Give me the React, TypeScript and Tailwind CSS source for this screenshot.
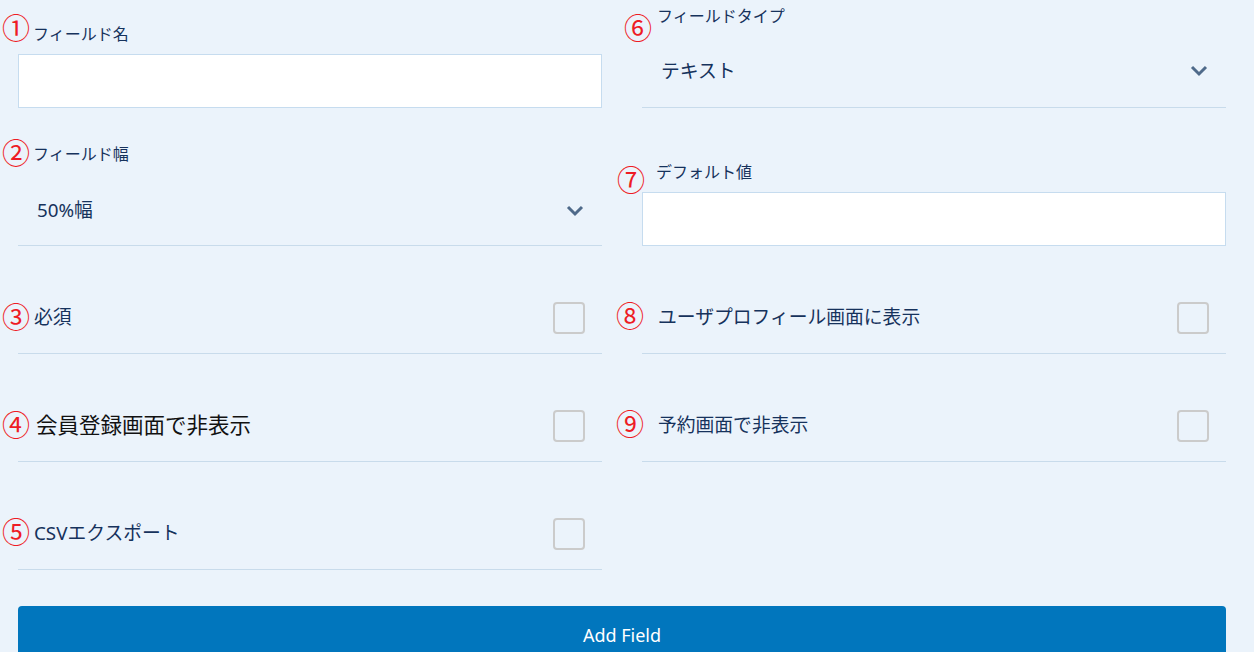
import React from "react";

const Chevron = () => (
  <svg width="18" height="12" viewBox="0 0 18 12" className="mr-[18px]">
    <polyline points="2,2 9,9 16,2" fill="none" stroke="#4f6a8a" strokeWidth="3" />
  </svg>
);

const Mark = ({ n, className }: { n: string; className: string }) => (
  <span className={`absolute text-[28px] leading-none text-[#ee1c25] ${className}`}>{n}</span>
);

const CheckRow = ({ label, big }: { label: string; big?: boolean }) => (
  <div className="flex items-center justify-between pt-[36px] border-b border-[#c8dbeb] h-[108px]">
    <span
      className={
        big
          ? "pl-[18px] text-[21.5px] text-[#111]"
          : "pl-[16px] text-[18.8px] text-[#16325c]"
      }
    >
      {label}
    </span>
    <div className="w-8 h-8 mr-[17px] rounded-[4px] border-2 border-[#cbcbcb]" />
  </div>
);

export default function App() {
  return (
    <div className="relative min-h-[652px] bg-[#ebf3fb] pl-[18px] pr-[28px] font-['Noto_Sans','Noto_Sans_CJK_JP',sans-serif] text-[#16325c] overflow-hidden">
      <div className="grid grid-cols-2 gap-x-10">
        {/* row 1 */}
        <div className="h-[108px] flex flex-col justify-end">
          <label className="pl-[15px] text-[16px] leading-6 mb-2">フィールド名</label>
          <div className="h-[54px] bg-white border border-[#c6dcef]" />
        </div>
        <div className="h-[108px] flex flex-col justify-end">
          <label className="pl-[15px] text-[16px] leading-6">フィールドタイプ</label>
          <div className="h-[80px] pt-[7px] flex items-center justify-between border-b border-[#c8dbeb]">
            <span className="pl-[19px] text-[18.8px]">テキスト</span>
            <Chevron />
          </div>
        </div>

        {/* row 2 */}
        <div className="h-[138px] flex flex-col justify-end">
          <label className="pl-[15px] text-[16px] leading-6 mb-[10px]">フィールド幅</label>
          <div className="h-[70px] flex items-center justify-between border-b border-[#c8dbeb]">
            <span className="pl-[19px] text-[18.8px]">50%幅</span>
            <Chevron />
          </div>
        </div>
        <div className="h-[138px] flex flex-col justify-end">
          <label className="pl-[14px] text-[16px] leading-6 mb-2">デフォルト値</label>
          <div className="h-[54px] bg-white border border-[#c6dcef]" />
        </div>

        {/* checkbox rows */}
        <CheckRow label="必須" />
        <CheckRow label="ユーザプロフィール画面に表示" />
        <CheckRow label="会員登録画面で非表示" big />
        <CheckRow label="予約画面で非表示" />
        <CheckRow label="CSVエクスポート" />
        <div />
      </div>

      <button className="mt-[36px] w-full h-[58px] rounded-t-[4px] bg-[#0176bd] text-white text-[18px]">
        Add Field
      </button>

      <Mark n="①" className="left-[2px] top-[14px]" />
      <Mark n="②" className="left-[2px] top-[139px]" />
      <Mark n="③" className="left-[2px] top-[303px]" />
      <Mark n="④" className="left-[2px] top-[411px]" />
      <Mark n="⑤" className="left-[2px] top-[518px]" />
      <Mark n="⑥" className="left-[624px] top-[14px]" />
      <Mark n="⑦" className="left-[617px] top-[166px]" />
      <Mark n="⑧" className="left-[616px] top-[302px]" />
      <Mark n="⑨" className="left-[616px] top-[410px]" />
    </div>
  );
}
